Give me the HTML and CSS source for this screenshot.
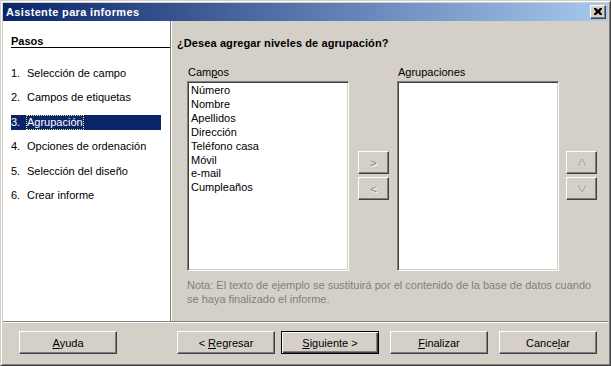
FILE: index.html
```html
<!DOCTYPE html>
<html lang="es">
<head>
<meta charset="utf-8">
<title>Asistente para informes</title>
<link rel="stylesheet" href="styles.css">
</head>
<body>
<div class="window">
  <div class="titlebar">
    <span class="title">Asistente para informes</span>
    <span class="close">
      <svg width="8" height="7" viewBox="0 0 8 7"><path d="M0 0h2l2 2 2-2h2v1L6 3.5 8 6v1H6L4 5 2 7H0V6l2-2.5L0 1z" fill="#000"/></svg>
    </span>
  </div>
  <div class="main">
    <aside class="steps">
      <div class="steps-title">Pasos</div>
      <ol class="step-list">
        <li class="step"><span class="num">1.</span><span class="label">Selección de campo</span></li>
        <li class="step"><span class="num">2.</span><span class="label">Campos de etiquetas</span></li>
        <li class="step selected"><span class="num">3.</span><span class="label">Agrupación</span></li>
        <li class="step"><span class="num">4.</span><span class="label">Opciones de ordenación</span></li>
        <li class="step"><span class="num">5.</span><span class="label">Selección del diseño</span></li>
        <li class="step"><span class="num">6.</span><span class="label">Crear informe</span></li>
      </ol>
    </aside>
    <section class="page">
      <h1 class="heading">¿Desea agregar niveles de agrupación?</h1>
      <div class="lists">
        <div class="field">
          <div class="field-label">Cam<u>p</u>os</div>
          <ul class="listbox">
            <li>Número</li>
            <li>Nombre</li>
            <li>Apellidos</li>
            <li>Dirección</li>
            <li>Teléfono casa</li>
            <li>Móvil</li>
            <li>e-mail</li>
            <li>Cumpleaños</li>
          </ul>
        </div>
        <div class="movers">
          <span class="btn small disabled">&gt;</span>
          <span class="btn small disabled">&lt;</span>
        </div>
        <div class="field">
          <div class="field-label">Agrupaciones</div>
          <ul class="listbox"></ul>
        </div>
        <div class="movers updown">
          <span class="btn small disabled">
            <svg width="8" height="7" viewBox="0 0 8 7"><path d="M0.5 6.5L3.5 0.5M4.5 0.5L7.5 6.5" stroke="#808080" fill="none" stroke-dasharray="1 1"/></svg>
          </span>
          <span class="btn small disabled">
            <svg width="8" height="7" viewBox="0 0 8 7"><path d="M0.5 0.5L3.5 6.5M4.5 6.5L7.5 0.5" stroke="#808080" fill="none" stroke-dasharray="1 1"/></svg>
          </span>
        </div>
      </div>
      <p class="note">Nota: El texto de ejemplo se sustituirá por el contenido de la base de datos cuando<br>se haya finalizado el informe.</p>
    </section>
  </div>
  <div class="separator"></div>
  <div class="footer">
    <span class="btn"><span><u>A</u>yuda</span></span>
    <div class="nav">
      <span class="btn"><span>&lt; <u>R</u>egresar</span></span>
      <span class="btn default"><span><u>S</u>iguiente &gt;</span></span>
      <span class="btn"><span><u>F</u>inalizar</span></span>
      <span class="btn"><span>Cance<u>l</u>ar</span></span>
    </div>
  </div>
</div>
</body>
</html>
```

FILE: styles.css
```css
* { box-sizing: border-box; }
html, body { margin: 0; padding: 0; }
body {
  background: #d4d0c8;
  font-family: "Liberation Sans", Arial, sans-serif;
  font-size: 11px;
  color: #000;
}
.window {
  width: 611px;
  height: 366px;
  background: #d4d0c8;
  border: 1px solid;
  border-color: #d4d0c8 #404040 #404040 #d4d0c8;
  box-shadow: inset 1px 1px 0 #fff, inset -1px -1px 0 #808080;
  padding: 2px;
  display: flex;
  flex-direction: column;
}
.titlebar {
  height: 18px;
  background: linear-gradient(to right, #0a246a, #a6caf0);
  display: flex;
  align-items: center;
  padding: 0 2px 0 2px;
  flex: none;
}
.title {
  flex: 1;
  color: #fff;
  font-weight: bold;
  font-size: 11px;
  letter-spacing: 0.35px;
  padding-left: 1px;
}
.close {
  width: 16px;
  height: 14px;
  background: #d4d0c8;
  border: 1px solid;
  border-color: #fff #404040 #404040 #fff;
  box-shadow: inset -1px -1px 0 #808080;
  display: flex;
  align-items: center;
  justify-content: center;
  padding: 0 1px 1px 0;
}
.close svg { display: block; }
.main {
  display: flex;
  height: 300px;
  flex: none;
}
.steps {
  width: 168px;
  background: #fff;
  border-right: 1px solid #808080;
  padding: 14px 9px 0 8px;
  flex: none;
}
.steps-title {
  font-weight: bold;
  line-height: 12px;
  border-bottom: 1px solid #000;
  margin-right: -9px;
}
.step-list {
  list-style: none;
  margin: 18px 0 0 0;
  padding: 0;
  display: flex;
  flex-direction: column;
  gap: 9.4px;
}
.step {
  height: 15px;
  line-height: 15px;
  display: flex;
  white-space: nowrap;
}
.step .num { width: 16px; flex: none; }
.step.selected {
  background: #0a246a;
  color: #fff;
}
.step.selected .label {
  outline: 1px dotted #f0e68c;
  outline-offset: -1px;
  padding: 0 1px;
  margin-left: -1px;
}
.page {
  flex: 1;
  border-left: 1px solid #fff;
  padding: 16px 0 0 5px;
  display: flex;
  flex-direction: column;
}
.heading {
  margin: 0;
  font-size: 11px;
  font-weight: bold;
  line-height: 13px;
  letter-spacing: 0.1px;
}
.lists {
  display: flex;
  margin: 16px 0 0 10px;
}
.field { display: flex; flex-direction: column; }
.field-label {
  height: 15px;
  line-height: 13px;
  padding-left: 1px;
}
.listbox {
  list-style: none;
  margin: 0;
  width: 162px;
  height: 190px;
  background: #fff;
  border: 1px solid;
  border-color: #808080 #fff #fff #808080;
  box-shadow: inset 1px 1px 0 #404040, inset -1px -1px 0 #d4d0c8;
  padding: 2px 2px;
}
.listbox li {
  line-height: 13.9px;
  padding-left: 1px;
}
.movers {
  display: flex;
  flex-direction: column;
  gap: 3px;
  margin: 85px 8px 0 9px;
}
.movers.updown { margin: 85px 0 0 7px; }
.btn {
  display: flex;
  align-items: center;
  justify-content: center;
  width: 98px;
  height: 23px;
  background: #d4d0c8;
  border: 1px solid;
  border-color: #fff #404040 #404040 #fff;
  box-shadow: inset -1px -1px 0 #808080;
  white-space: pre;
}
.btn.small {
  width: 31px;
  height: 23px;
  font-size: 11px;
}
.btn.disabled {
  color: #808080;
  text-shadow: 1px 1px 0 #fff;
}
.btn.default {
  border: 1px solid #000;
  box-shadow: inset 1px 1px 0 #fff, inset -1px -1px 0 #404040, inset -2px -2px 0 #808080;
}
.note {
  margin: 7px 0 0 10px;
  color: #808080;
  line-height: 14px;
  white-space: nowrap;
}
.separator {
  height: 2px;
  border-top: 1px solid #808080;
  border-bottom: 1px solid #fff;
  flex: none;
}
.footer {
  display: flex;
  justify-content: space-between;
  padding: 8px 11px 0 16px;
}
.nav {
  display: flex;
  gap: 11px;
}
.nav .btn:first-child { margin-right: -5px; }
u { text-decoration: underline; text-underline-offset: 1px; }
```
